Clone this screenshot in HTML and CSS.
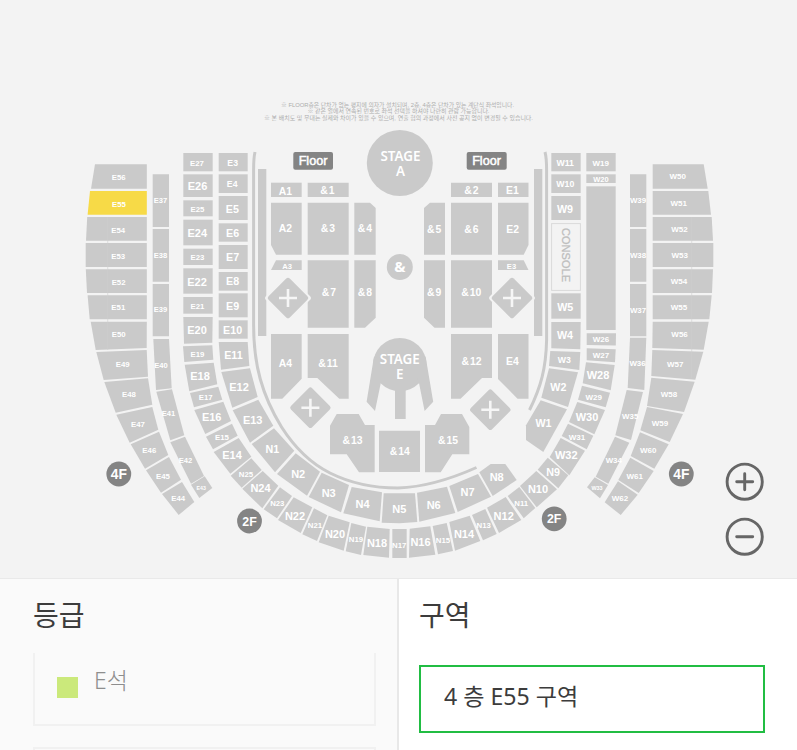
FILE: index.html
```html
<!DOCTYPE html>
<html lang="ko">
<head>
    <meta charset="UTF-8">
    <meta name="viewport" content="width=device-width, initial-scale=1.0">
    <title>좌석 선택</title>
    <link rel="stylesheet" href="styles.css">
</head>
<body>
    <div class="seat-map">
        <svg class="map" viewBox="0 0 797 578" width="797" height="578">
            <g class="notice">
                <text x="281" y="106.5" textLength="233" lengthAdjust="spacingAndGlyphs">※ FLOOR층은 단차가 없는 평지에 의자가 설치되며, 2층, 4층은 단차가 있는 계단식 좌석입니다.</text>
                <text x="307.5" y="113.2" textLength="182" lengthAdjust="spacingAndGlyphs">※ 같은 열에서 연속된 번호로 좌석 선택을 하셔야 나란히 관람 가능합니다.</text>
                <text x="264" y="119.9" textLength="269" lengthAdjust="spacingAndGlyphs">※ 본 배치도 및 무대는 실제와 차이가 있을 수 있으며, 연출 협의 과정에서 사전 공지 없이 변경될 수 있습니다.</text>
            </g>

            <g id="sections"></g>

            <!-- seams on the 4F blocks -->
            <path class="seam" d="M107.7 217V350M691.7 217V378"/>

            <!-- rails and side bars -->
            <path class="rail" d="M255 152Q253.6 158 253.6 170V325C253.6 365 262 395 281.5 427C293 445 310 463 330 473C352 484 374 488 398 488C426 487 453 478 476.5 467.5"/>
            <path class="rail" d="M545 152Q546.6 158 546.6 170V340C546 368 541 387 529.5 410"/>
            <rect class="area" x="258" y="169" width="8.3" height="167"/>
            <rect class="area" x="534" y="169" width="8.3" height="167"/>
            <rect class="area" x="586.3" y="186.3" width="29.4" height="143.7"/>

            <rect class="console" x="551.6" y="223.6" width="28.8" height="66.8"/>
            <text class="console-text" transform="translate(562.2 228) rotate(90)" textLength="54">CONSOLE</text>

            <!-- stages -->
            <circle class="area" cx="399.8" cy="163" r="33"/>
            <text class="stage" x="400.5" y="160.6">STAGE</text>
            <text class="stage" x="400.5" y="175.8">A</text>
            <circle class="area" cx="399.8" cy="267" r="13"/>
            <text class="amp" x="400" y="272.3">&amp;</text>
            <circle class="area" cx="399.8" cy="364.7" r="26.7"/>
            <path class="area" d="M374 356.5L366.6 401.7L375 411L380.8 383L390 360ZM425.6 356.5L433.2 401.7L424.6 411L419 383L410 360ZM395 385H405.7V419H395Z"/>
            <text class="stage" x="399.8" y="364">STAGE</text>
            <text class="stage" x="399.8" y="378.8">E</text>

            <!-- cross gates -->
            <g id="gates"></g>

            <rect class="badge" x="293.3" y="152" width="39.7" height="17.7" rx="2"/>
            <text class="badge-text" x="313" y="165.3">Floor</text>
            <rect class="badge" x="466.7" y="152" width="40" height="17.7" rx="2"/>
            <text class="badge-text" x="486.5" y="165.3">Floor</text>

            <circle class="badge" cx="118.8" cy="474" r="12.4"/>
            <text class="floor-text" x="118.8" y="479">4F</text>
            <circle class="badge" cx="681.3" cy="474" r="12.4"/>
            <text class="floor-text" x="681.3" y="479">4F</text>
            <circle class="badge" cx="249.5" cy="521" r="12.4"/>
            <text class="floor-text small" x="249.5" y="525.6">2F</text>
            <circle class="badge" cx="554.2" cy="518.8" r="12.4"/>
            <text class="floor-text small" x="554.2" y="523.4">2F</text>
        </svg>
        <div class="zoom">
            <button class="zoom-btn" aria-label="확대">
                <svg viewBox="0 0 40 40"><circle cx="19.7" cy="19.7" r="17.6"/><path d="M11.7 19.7H27.7M19.7 11.7V27.7"/></svg>
            </button>
            <button class="zoom-btn" aria-label="축소">
                <svg viewBox="0 0 40 40"><circle cx="19.7" cy="19.7" r="17.6"/><path d="M11.7 19.7H27.7"/></svg>
            </button>
        </div>
    </div>
    <div class="panels">
        <div class="panel grade">
            <h2>등급</h2>
            <div class="grade-item"><span class="color"></span><span class="name">E석</span></div>
            <div class="grade-item next"></div>
        </div>
        <div class="panel zone">
            <h2>구역</h2>
            <div class="zone-item">4 층 E55 구역</div>
        </div>
    </div>
    <script src="script.js"></script>
</body>
</html>
```
FILE: styles.css
```css
* {
    box-sizing: border-box;
}
body {
    margin: 0;
    height: 750px;
    overflow: hidden;
    display: flex;
    flex-direction: column;
    background-color: #f3f3f3;
    font-family: "Noto Sans", "Noto Sans CJK KR", sans-serif;
    color: #3c3c3c;
}
.seat-map {
    position: relative;
    height: 578px;
    flex: none;
}
.map {
    display: block;
    font-family: "Liberation Sans", Arial, sans-serif;
}
.area {
    fill: #cacaca;
}
.selected {
    fill: #f7da47;
}
.seam {
    stroke: #d0d0d0;
    stroke-width: 0.6;
}
.rail {
    fill: none;
    stroke: #cacaca;
    stroke-width: 3;
}
.notice {
    font-family: "Liberation Sans", "Noto Sans CJK KR", sans-serif;
    font-size: 5.7px;
    fill: #adadad;
}
.label {
    fill: #fff;
    font-weight: bold;
    text-anchor: middle;
}
.console {
    fill: #f3f3f3;
    stroke: #dadada;
    stroke-width: 1;
}
.console-text {
    font-size: 11px;
    fill: #bdbdbd;
    stroke: #bdbdbd;
    stroke-width: 0.3;
}
.stage {
    font-family: "Noto Sans", sans-serif;
    font-size: 13.4px;
    font-weight: 600;
    fill: #fff;
    text-anchor: middle;
}
.amp {
    font-family: "Noto Sans", sans-serif;
    font-size: 15px;
    font-weight: bold;
    fill: #fff;
    text-anchor: middle;
}
.gate {
    fill: #cacaca;
}
.gate-gap {
    fill: #f3f3f3;
}
.gate-plus {
    stroke: #f6f6f6;
    stroke-width: 2.6;
}
.badge {
    fill: #848484;
}
.badge-text {
    font-size: 12.6px;
    fill: #fff;
    stroke: #fff;
    stroke-width: 0.5;
    text-anchor: middle;
}
.floor-text {
    font-size: 13.8px;
    font-weight: bold;
    fill: #fff;
    text-anchor: middle;
}
.floor-text.small {
    font-size: 12.4px;
}
.zoom {
    position: absolute;
    left: 725px;
    top: 462px;
    display: flex;
    flex-direction: column;
    gap: 15px;
}
.zoom-btn {
    width: 40px;
    height: 40px;
    padding: 0;
    border: 0;
    background: none;
}
.zoom-btn svg {
    display: block;
    fill: none;
    stroke: #666;
    stroke-width: 2.9;
    stroke-linecap: round;
}
.panels {
    display: flex;
    flex: 1;
    min-height: 0;
    overflow: hidden;
    border-top: 1px solid #e9e9e9;
}
.panel {
    padding-top: 14px;
    overflow: hidden;
}
.panel h2 {
    margin: 0;
    font-size: 28px;
    line-height: 44px;
    font-weight: 400;
}
.grade {
    width: 399px;
    padding-left: 33px;
    padding-right: 21px;
    background-color: #fafafa;
    border-right: 2px solid #e8e8e8;
}
.grade-item {
    display: flex;
    gap: 16px;
    height: 73px;
    margin-top: 16px;
    padding: 0 22px;
    border: 2px solid #f1f1f1;
    border-top: 0;
}
.grade-item.next {
    height: 3px;
    margin-top: 21px;
    border-top: 2px solid #f1f1f1;
    border-bottom: 0;
}
.color {
    width: 21px;
    height: 21px;
    margin-top: 24px;
    background-color: #cbe97b;
}
.name {
    font-size: 23px;
    line-height: 54px;
    font-weight: 300;
    color: #8e8e8e;
}
.zone {
    flex: 1;
    padding-left: 20px;
    background-color: #fff;
}
.zone-item {
    width: 346px;
    height: 68px;
    margin-top: 28px;
    padding-left: 23px;
    border: 2px solid #21bd43;
    font-size: 23.1px;
    line-height: 59px;
}
```
FILE: script.js
```javascript
// label, font size, label center x, label center y, outline
const sections = [
    // 4F left, outer
    ['E56', 7.5, 118.7, 177, '95,164.3 146.8,164.3 146.8,188.7 91,188.7'],
    ['E55', 7.5, 119, 203.8, '90,191 146.8,191 146.8,214.7 87.6,214.7'],
    ['E54', 7.5, 118.2, 229.8, '87.2,217 146.8,217 146.8,240.7 86,240.7'],
    ['E53', 7.5, 118.2, 256.3, '85.7,243 146.8,243 146.8,267 85.7,267'],
    ['E52', 7.5, 118.6, 282.2, '85.8,269.3 146.8,269.3 146.8,293 87,293'],
    ['E51', 7.5, 118.3, 307.5, '87.6,295.3 146.8,295.3 146.8,319.3 89.7,319.3'],
    ['E50', 7.5, 118.7, 334.7, '90.7,321.7 146.8,321.7 146.7,348 95.7,350'],
    ['E49', 7.5, 122.7, 364.7, '96.3,352 146.7,350 148,376.7 103.7,380'],
    ['E48', 7.5, 129, 394, '104.3,382 148,378.3 152.3,404.7 115.7,412.7'],
    ['E47', 7.5, 138, 424, '116.3,414.7 152.3,407 158.3,429.7 129.7,442.7'],
    ['E46', 7.5, 149.3, 450, '130.7,444.3 159,431.7 168.3,455 145,468.7'],
    ['E45', 7.5, 163, 476, '146,470.3 169,457 181,479.7 161,492.7'],
    ['E44', 7.5, 178.2, 498.2, '162,494 182,482 194.3,502 178.7,515'],
    // 4F left, inner
    ['E37', 7.3, 160.5, 200.5, '152.7,174.3 169,174.3 169,227 152.7,227'],
    ['E38', 7.3, 160.4, 255, '152.7,229 169,229 169,281.7 152.7,281.7'],
    ['E39', 7.3, 160.4, 309.5, '152.7,284 169,284 169,336.3 152.7,336.3'],
    ['E40', 7.3, 161, 365, '153.3,339 169,339 171.7,388.3 156,390'],
    ['E41', 7.3, 168.5, 413.8, '156.3,391.7 172,389.3 184.3,435.3 170.3,440.3'],
    ['E42', 7.3, 185.4, 460, '170.3,442.3 185,436.7 204,476 191,483.7'],
    ['E43', 5, 201.2, 488.3, '191,484.7 204.7,476.3 212.3,488 199.3,498'],
    // 2F outer ring, left to right
    ['E27', 7.5, 197, 163.5, '183.3,153 212.7,153 212.7,171.3 183.3,171.3'],
    ['E26', 10.6, 197.5, 186.5, '183.3,174.3 212.7,174.3 212.7,197 183.3,197'],
    ['E25', 7.5, 197.5, 209, '183.3,200.3 212.7,200.3 212.7,216.3 183.3,216.3'],
    ['E24', 10.6, 197.3, 233.5, '183.3,219.7 212.7,219.7 212.7,245.3 183.3,245.3'],
    ['E23', 7.5, 197.5, 257.5, '183.3,248.7 212.7,248.7 212.7,265 183.3,265'],
    ['E22', 10.6, 197, 282, '183.3,268.3 212.7,268.3 212.7,293.7 183.3,293.7'],
    ['E21', 7.5, 197.5, 306, '183.3,297 212.7,297 212.7,313.7 183.3,313.7'],
    ['E20', 10.6, 197, 330.3, '183.3,317 212.7,317 212.3,342.7 184,343.7'],
    ['E19', 7.5, 197.5, 354.5, '183,346.3 212.3,345.3 213.3,359.7 184.3,362'],
    ['E18', 10.6, 200, 376, '184.7,364.7 213.7,362.7 217.3,384.3 189.3,391.3'],
    ['E17', 7.5, 205.7, 397, '190,393 218.3,386.7 222.3,399.7 194,407.3'],
    ['E16', 10.6, 211.7, 417.5, '194.3,410 223.3,401.7 231,421 205.3,434'],
    ['E15', 7.5, 222, 437.5, '206,436.7 232,423.7 237.7,435.7 213,449.3'],
    ['E14', 10.6, 232, 455.5, '213.7,452 238.7,438 251.3,456.7 230.3,473.7'],
    ['N25', 7.5, 246, 474, '251.3,458.3 261.7,470 241.7,487.7 230.7,475.7'],
    ['N24', 10.6, 260.5, 488.5, '262.7,471 278.3,485.7 262.3,508.3 242.3,488.7'],
    ['N23', 7.5, 277.3, 503.7, '280,487.3 292,496 277,518.3 263.7,509.3'],
    ['N22', 10.6, 295, 516, '293.7,497.3 312.3,507.3 300.7,533 278,520'],
    ['N21', 7.5, 315, 525.5, '314,508.3 327.3,515.3 317,541 302.3,534.3'],
    ['N20', 10.6, 335, 534, '328.7,515.7 349.7,522.3 343.7,550.7 318.7,542.3'],
    ['N19', 7.5, 356, 539.5, '351.3,523 366,526.7 361,555 345.7,551.3'],
    ['N18', 10.6, 377, 543.2, '367.3,526.7 389.7,529 389,557.7 363.3,555'],
    ['N17', 7.5, 399.2, 545, '392.3,529 406.7,529 406.7,558 392.3,558'],
    ['N16', 10.6, 420.5, 542.5, '409.7,528.7 430.3,526.3 435.3,554.7 409,557.7'],
    ['N15', 7.5, 443, 540.5, '432.7,526 446.7,523 453,551 438,554.3'],
    ['N14', 10.6, 464, 534, '449.3,522 469.7,515.7 480.3,541 455,550.7'],
    ['N13', 7.5, 483.7, 525.3, '472,515 485.3,509 496.7,534 483,540.3'],
    ['N12', 10.6, 503.7, 516, '487,507.7 505.7,497 521.3,520 499,533'],
    ['N11', 7.5, 521.2, 503, '507.7,496 519.3,487 535.3,508 523.7,518.3'],
    ['N10', 10.6, 538, 489.3, '520,486 536.3,471 557,489.3 536.7,507.3'],
    ['N9', 10.3, 553, 472.7, '537.7,469.7 547.7,457.7 568.3,475.3 558.3,488.3'],
    ['W32', 10.6, 566.3, 455, '549.7,457 560.7,438 585,450.7 569.3,475.3'],
    ['W31', 7.7, 577, 437.5, '561.7,436 568,423.7 593.3,435.7 586.7,449.3'],
    ['W30', 10.6, 587, 417, '569,422 577.3,402 605,410 594.3,434.3'],
    ['W29', 7.7, 593.7, 397.3, '578,399.7 582,385.7 610,392.7 605.7,407.3'],
    ['W28', 10.6, 598, 375.3, '582.7,383.3 586,362.3 614.7,365 610.7,390.3'],
    ['W27', 7.7, 601, 355.3, '586.7,348.3 615.7,349.3 615,362.3 586.7,360.3'],
    ['W26', 7.7, 601, 339.5, '586.7,333.3 616,333.3 615.8,345.5 586.7,345'],
    ['W20', 7.2, 601, 179.6, '586.3,174.3 615.7,174.3 615.7,183 586.3,183'],
    ['W19', 7.7, 600.7, 163, '586.3,153 615.7,153 615.7,171.3 586.3,171.3'],
    // 2F inner ring, left to right
    ['E3', 8.4, 232.7, 163.2, '218.7,153 247.7,153 247.7,171.3 218.7,171.3'],
    ['E4', 8.4, 232.2, 184.3, '218.7,174.3 247.7,174.3 247.7,193 218.7,193'],
    ['E5', 10.3, 232.3, 209, '218.7,196 247.7,196 247.7,220 218.7,220'],
    ['E6', 10.3, 232.6, 233.2, '218.7,223.3 247.7,223.3 247.7,241.7 218.7,241.7'],
    ['E7', 10.3, 232.6, 257.7, '218.7,245 247.7,245 247.7,269 218.7,269'],
    ['E8', 10.3, 232.6, 281.7, '218.7,272 247.7,272 247.7,290.7 218.7,290.7'],
    ['E9', 10.3, 232.6, 306.3, '218.7,293.3 247.7,293.3 247.7,317.3 218.7,317.3'],
    ['E10', 10.3, 232.6, 330.3, '218.7,320.3 247.7,320.3 247.7,338.7 218.7,338.7'],
    ['E11', 10.3, 233.4, 355.3, '218.7,342 247.7,342 249.3,366 221,369.7'],
    ['E12', 10.6, 239, 386.7, '221.3,372 250,368.3 257.7,397 232.3,407.7'],
    ['E13', 10.6, 252.7, 420, '232.7,410.3 258.3,399.7 273.3,425.7 250,442.7'],
    ['N1', 10.3, 272.3, 449.5, '274,428.3 294.3,450.7 275,472.3 251.7,444'],
    ['N2', 10.6, 298.2, 474, '295.7,453.3 320,471.7 307,495.7 277,474'],
    ['N3', 10.6, 328.7, 493.5, '321.7,472.7 349,485 341,512.3 308.7,497'],
    ['N4', 10.6, 362.5, 504.5, '351.7,487 382,492.3 379.7,521.3 343.3,513.3'],
    ['N5', 10.6, 399.3, 508.8, '383.7,493.3 415,493.3 417.3,522 399.5,523.2 381.7,522.7'],
    ['N6', 10.6, 433.7, 505.3, '417,492.7 447,486.7 455.3,513 419.3,521.7'],
    ['N7', 10.6, 467.5, 492.3, '449.3,486 478,474 491,496.7 457.7,512'],
    ['N8', 10.6, 496.7, 477.3, '479.3,472.3 490.7,464 505.3,464 516.7,480 492.7,496'],
    ['W1', 10.3, 543.5, 423.5, '540.7,400.3 567,409.3 543.3,452 526,440 526,425.3'],
    ['W2', 10.3, 558.4, 387, '549,368.3 578,372.3 568,407 541.3,397.7'],
    ['W3', 8.4, 564.3, 360.3, '550.3,351 580.3,352 579.3,370 549,366'],
    ['W4', 10.3, 565, 335.7, '551.3,322 580.7,322 580.3,349.3 551.3,348.3'],
    ['W5', 10.3, 565.2, 307.3, '551.3,293.3 580.7,293.3 580.7,318.7 551.3,318.7'],
    ['W9', 10.3, 565, 209.5, '551.3,196 580.7,196 580.7,220 551.3,220'],
    ['W10', 8.4, 565.3, 184, '551.3,174.3 580.7,174.3 580.7,193 551.3,193'],
    ['W11', 8.4, 565.2, 163.4, '551.3,153 580.7,153 580.7,171.3 551.3,171.3'],
    // 4F right, outer
    ['W50', 7.7, 677.8, 176.5, '652.7,164.3 703.7,164.3 707.7,188.7 652.7,188.7'],
    ['W51', 7.7, 678.7, 203, '652.7,191 708.3,191 711,214.7 652.7,214.7'],
    ['W52', 7.7, 679.4, 229, '652.7,217 711.7,217 713,240.7 652.7,240.7'],
    ['W53', 7.7, 679.7, 255, '652.7,243 713.3,243 713.3,267 652.7,267'],
    ['W54', 7.7, 679, 281, '652.7,269.3 713,269.3 712,293 652.7,293'],
    ['W55', 7.7, 679, 307.5, '652.7,295.3 711.7,295.3 709.3,319.3 652.7,319.3'],
    ['W56', 7.7, 679.6, 334.5, '652.7,321.7 708.7,321.7 703.7,349.7 652.3,348'],
    ['W57', 7.7, 675.3, 364.5, '652.3,350 703.3,351.7 695.3,379.7 651.3,376'],
    ['W58', 7.7, 669, 394, '651.3,377.7 694.7,381.7 684,412 647,406'],
    ['W59', 7.7, 660, 423.5, '647,407 683,414 669.7,442 640.3,430.3'],
    ['W60', 7.7, 648.3, 450, '640,432.3 668.7,444.3 654.3,468.7 630.7,456'],
    ['W61', 7.7, 634.8, 475.8, '630.3,457.7 653.7,471 638.7,493 618.3,480'],
    ['W62', 7.7, 620, 498.3, '618,481.3 637.7,494.7 620.7,515 604.7,502.3'],
    // 4F right, inner
    ['W39', 7.6, 638, 200.7, '630,174.3 646.3,174.3 646.3,227 630,227'],
    ['W38', 7.6, 638, 255, '630,229 646.3,229 646.3,281.7 630,281.7'],
    ['W37', 7.6, 638, 310, '630,284 646.3,284 646.3,336.3 630,336.3'],
    ['W36', 7.6, 637.5, 363.3, '630,337.7 646.3,337.7 644.3,390 627.7,388'],
    ['W35', 7.6, 630.2, 416, '626.7,390 643,392 631,440 615.3,435.3'],
    ['W34', 7.6, 613.8, 460, '615,436.7 629.3,442.7 608.3,483.7 595.7,476.7'],
    ['W33', 5.2, 597, 488.3, '594.7,477.3 608,485 600,498.3 587,487.3'],
    // Floor
    ['A1', 10, 285.5, 191, '271,182.7 301.7,182.7 301.7,197 271,197'],
    ['&1', 10, 327.5, 190.5, '307.7,182.7 348.7,182.7 348.7,197 307.7,197'],
    ['A2', 10, 285.5, 228, '271,202.7 301.7,202.7 301.7,254.7 276,254.7 271,245'],
    ['&3', 10, 328, 228, '307.7,202.7 348.7,202.7 348.7,254.7 307.7,254.7'],
    ['&4', 10, 365, 228.6, '354.3,202.7 370,202.7 375.7,208 375.7,254.7 354.3,254.7'],
    ['A3', 7.3, 287, 266, '276,260.3 301.7,260.3 301.7,270 271,270'],
    ['&7', 10, 329, 292.7, '307.7,260.3 348.7,260.3 348.7,327.7 307.7,327.7'],
    ['&8', 10, 365, 292, '354.3,260.3 375.7,260.3 375.7,317.7 365,327.7 354.3,327.7'],
    ['A4', 10, 285.3, 363, '271,334 301.7,334 301.7,378.7 282.3,398.7 271,398.7'],
    ['&11', 10, 328, 363, '307.7,334 348.7,334 348.7,398.7 339.3,398.7 317.3,378 307.7,378'],
    ['&2', 10, 471.5, 190.2, '451,182.7 492,182.7 492,197 451,197'],
    ['E1', 10, 512.4, 190.5, '498,182.7 528.5,182.7 528.5,197 498,197'],
    ['&5', 10, 434.2, 229, '430,202.7 445,202.7 445,254.7 424,254.7 424,208'],
    ['&6', 10, 471.5, 229, '451,202.7 492,202.7 492,254.7 451,254.7'],
    ['E2', 10, 512.7, 229, '498,202.7 528.5,202.7 528.5,245 523.7,254.7 498,254.7'],
    ['&9', 10, 434.2, 292, '424,260.3 445,260.3 445,327.7 434.5,327.7 424,317.7'],
    ['&10', 10, 471.2, 292, '451,260.3 492,260.3 492,327.7 451,327.7'],
    ['E3', 7.3, 511.5, 266, '498,260.3 523.7,260.3 528.5,270 498,270'],
    ['&12', 10, 471.5, 361.5, '451,334 492,334 492,378 482,378 460.5,398.7 451,398.7'],
    ['E4', 10, 512.4, 361.5, '498,334 528.5,334 528.5,398.7 517.5,398.7 498,379'],
    ['&13', 10, 352.5, 440, '336.7,414 358.7,414 365,425 374.7,425 374.7,472.3 359,472.3 346.7,454.3 330,454.3 330,425.7'],
    ['&14', 10, 399.7, 451.5, '379,430.7 420,430.7 420,472 379,472'],
    ['&15', 10, 448, 440, '425,472.3 425,425 435,425 441,414 462,414 469.3,427 469.3,454.3 452.3,454.3 440.7,472.3']
];

const gates = [[288, 298], [512, 298], [310.4, 407.7], [490.3, 409.7]];

function addNode(parent, tag, attrs, text) {
    const node = document.createElementNS('http://www.w3.org/2000/svg', tag);
    for (const key in attrs) {
        node.setAttribute(key, attrs[key]);
    }
    if (text) {
        node.textContent = text;
    }
    parent.appendChild(node);
}

function drawSections() {
    const group = document.getElementById('sections');
    sections.forEach(function([name, size, x, y, points]) {
        addNode(group, 'polygon', { points: points, class: name === 'E55' ? 'area selected' : 'area' });
    });
    sections.forEach(function([name, size, x, y]) {
        const fontSize = size * 1.04;
        const attrs = { x: x, y: y + fontSize * 0.35, 'font-size': fontSize, class: 'label' };
        if (name[0] === '&') {
            attrs.dx = name.length === 2 ? '0 1' : '0 1 0';
        }
        addNode(group, 'text', attrs, name);
    });
}

function drawGates() {
    const group = document.getElementById('gates');
    gates.forEach(function([x, y]) {
        const turn = `rotate(45 ${x} ${y})`;
        addNode(group, 'rect', { x: x - 17, y: y - 17, width: 34, height: 34, rx: 3, transform: turn, class: 'gate-gap' });
        addNode(group, 'rect', { x: x - 15, y: y - 15, width: 30, height: 30, rx: 2.5, transform: turn, class: 'gate' });
        addNode(group, 'path', { d: `M${x - 9} ${y}h18M${x} ${y - 9}v18`, class: 'gate-plus' });
    });
}

drawSections();
drawGates();
```
